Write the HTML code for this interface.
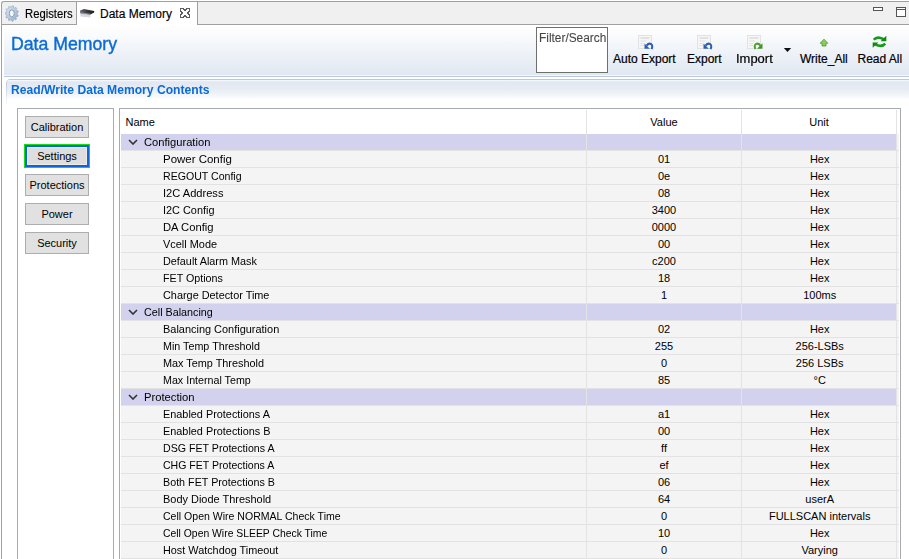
<!DOCTYPE html>
<html><head><meta charset="utf-8">
<style>
*{box-sizing:border-box;margin:0;padding:0}
html,body{width:909px;height:559px;overflow:hidden;background:#fff;font-family:"Liberation Sans",sans-serif;position:relative}
.abs{position:absolute}
#tabstrip{left:1px;top:1px;width:908px;height:24px;background:#f0f0f0;border-top:1px solid #a0a0a0;border-left:1px solid #a0a0a0;border-bottom:1px solid #a0a0a0;border-top-left-radius:3px}
#tab2{left:76px;top:1px;width:122px;height:24px;background:#fff;border-left:1px solid #a0a0a0;border-right:1px solid #a0a0a0;border-top:1px solid #a0a0a0}
.tabtxt{font-size:12px;color:#000;top:7px;white-space:nowrap;-webkit-text-stroke:0.15px #000}
#frameL{left:1px;top:24px;width:1px;height:535px;background:#a0a0a0}
#header{left:4px;top:25px;width:905px;height:51px;background:linear-gradient(#fff,#fbfcfd 15%,#e1e8f2);border-bottom:1px solid #f6f8fb}
#title{left:11px;top:34px;font-size:17.5px;transform-origin:0 0;transform:scaleX(1.01);-webkit-text-stroke:0.4px #0b6cd6;color:#0b6cd6;white-space:nowrap}
#hline1{left:4px;top:76px;width:905px;height:1px;background:#b9c9dd}
#hline2{left:6px;top:79px;width:903px;height:27px;border-top:1px solid #b9c9dd;border-left:1px solid #bccbe0;border-top-left-radius:4px;-webkit-mask-image:linear-gradient(#000 20%,transparent)}
#sechead{left:7px;top:80px;width:902px;height:20px;border-top-left-radius:3px;background:linear-gradient(#f8fafc,#e2e8f1 2px,#e7ecf4 9px,#f6f8fb 17px,#fff 19px)}
#secborder{display:none}
#sectitle{left:11px;top:83px;transform-origin:0 0;transform:scaleX(1.01);font-size:12px;font-weight:bold;color:#0a6ad6;white-space:nowrap}
#leftpanel{left:17px;top:108px;width:97px;height:460px;border:1px solid #a9a9b0;background:#fff}
.btn{left:25px;width:64px;height:22px;background:#e1e1e1;border:1px solid #adadad;font-size:11px;text-align:center;line-height:20px;color:#000}
#table{left:119px;top:108px;width:782px;height:460px;border:1px solid #a9a9b0;background:#fff}
.hdr{top:110px;height:24px;font-size:11px;line-height:24px;color:#000}
.vsep{top:110px;width:1px;height:449px;background:#e3e3e3}
.row{left:121px;width:778px;height:17px;background:#f4f4f4;border-bottom:1px solid #e2e2e2;font-size:11px;line-height:16px;color:#000}
.grp{background:linear-gradient(to right,#d2d2ee 775px,#f4f4f4 775px);border-bottom:1px solid #e4e4e4}
.chev{position:absolute;left:6.5px;top:4.5px}
.row span{position:absolute;white-space:nowrap}
.c1{left:42px;transform-origin:0 0}
.g1{left:23px;transform-origin:0 0}
.c2{left:466px;width:154px;text-align:center}
.c3{left:621.7px;width:154px;text-align:center}
.tb{font-size:12px;color:#000;top:52px;white-space:nowrap;-webkit-text-stroke:0.2px #000}
</style></head><body>
<div id="tabstrip" class="abs"></div>
<div id="tab2" class="abs"></div>
<svg class="abs" style="left:4.5px;top:4.5px" width="14.5" height="17" viewBox="0 0 16 16" preserveAspectRatio="none">
<defs><linearGradient id="gg" x1="0" y1="0" x2="1" y2="1"><stop offset="0" stop-color="#e2ebf5"/><stop offset="0.5" stop-color="#b9cbe0"/><stop offset="1" stop-color="#93a9c7"/></linearGradient></defs>
<path fill="url(#gg)" stroke="#8aa0bf" stroke-width="0.6" d="M7.50 2.00 L8.00 0.72 L9.36 0.94 L9.42 2.32 L10.74 2.95 L11.86 2.14 L12.88 3.06 L12.19 4.26 L12.96 5.51 L14.33 5.43 L14.69 6.76 L13.47 7.38 L13.44 8.85 L14.64 9.53 L14.22 10.84 L12.85 10.71 L12.03 11.93 L12.68 13.15 L11.62 14.03 L10.54 13.17 L9.19 13.76 L9.07 15.13 L7.71 15.30 L7.26 14.00 L5.81 13.76 L4.97 14.85 L3.73 14.25 L4.06 12.91 L2.97 11.93 L1.67 12.39 L0.95 11.22 L1.95 10.27 L1.56 8.85 L0.22 8.54 L0.25 7.17 L1.60 6.91 L2.04 5.51 L1.08 4.52 L1.85 3.38 L3.13 3.89 L4.26 2.95 L3.98 1.60 L5.24 1.06 L6.04 2.18 Z"/>
<ellipse cx="7.5" cy="7.9" rx="2.7" ry="3.3" fill="#f4f7fb" stroke="#7d94b4" stroke-width="0.9"/>
</svg>
<div class="abs tabtxt" style="left:25px;transform-origin:0 0;transform:scaleX(0.94)">Registers</div>
<svg class="abs" style="left:79px;top:8px" width="18" height="11" viewBox="0 0 18 11">
<defs><linearGradient id="cg" x1="0" y1="0" x2="1" y2="0"><stop offset="0" stop-color="#6a6a6a"/><stop offset="0.5" stop-color="#3a3a3a"/><stop offset="1" stop-color="#1e1e1e"/></linearGradient></defs>
<path d="M1.4 5.5 L11.4 7 L11.4 9.5 L1.4 8.5 Z" fill="#d6d8df"/>
<path d="M1.1 2.6 L4.9 1 L15.2 3 L15.2 4.4 L11.4 6.6 L1.1 5 Z" fill="url(#cg)"/>
<path d="M1.1 4.3 L11.4 5.8 L11.4 7 L1.1 5.6 Z" fill="#8a909c"/>
</svg>
<div class="abs tabtxt" style="left:100px">Data Memory</div>
<svg class="abs" style="left:180px;top:8px" width="10" height="10" viewBox="0 0 10 10"><path d="M0.5 0.5 H3 L5 2.5 L7 0.5 H9.5 V3 L7.5 5 L9.5 7 V9.5 H7 L5 7.5 L3 9.5 H0.5 V7 L2.5 5 L0.5 3 Z" fill="#fff" stroke="#5f5f5f" stroke-width="1" shape-rendering="crispEdges"/></svg>
<svg class="abs" style="left:872px;top:6px" width="14" height="6" viewBox="0 0 14 6"><rect x="1.5" y="1.5" width="9" height="3" fill="#fff" stroke="#555" stroke-width="1"/></svg>
<svg class="abs" style="left:895px;top:6px" width="13" height="13" viewBox="0 0 13 13"><rect x="1.5" y="1.5" width="9" height="9" fill="#fff" stroke="#555" stroke-width="1"/><line x1="1.5" y1="3.5" x2="10.5" y2="3.5" stroke="#555" stroke-width="1"/></svg>
<div id="frameL" class="abs"></div>
<div id="header" class="abs"></div>
<div id="title" class="abs">Data Memory</div>
<div id="hline1" class="abs"></div>
<div id="hline2" class="abs"></div>
<div id="sechead" class="abs"></div>
<div id="secborder" class="abs"></div>
<div id="sectitle" class="abs">Read/Write Data Memory Contents</div>

<div id="filter" class="abs" style="left:536px;top:27px;width:72px;height:46px;border:1px solid #6f6f6f;background:#fff"></div>
<div class="abs tb" style="left:539px;top:31px;color:#484848;-webkit-text-stroke:0.1px #484848;transform-origin:0 0;transform:scaleX(0.99)">Filter/Search</div>
<svg class="abs" style="left:637px;top:34px" width="18" height="17" viewBox="0 0 18 17"><rect x="1.5" y="1.5" width="13" height="13" fill="#f6f6f6" stroke="#e2e2e2"/><path d="M3.5 3.5H12.5M3.5 4.5H12.5M3.5 7H9M3.5 9.5H7M3.5 11.5H7" stroke="#e2e2e2"/><path d="M9.6 11.6 Q11.6 8.8 14 10 Q16.2 11.4 14.6 15.2" fill="none" stroke="#2b5fb3" stroke-width="2"/><path d="M7.5 9.5 V14.8 H12.8 Z" fill="#2b5fb3"/></svg>
<div class="abs tb" style="left:613px">Auto Export</div>
<svg class="abs" style="left:696px;top:34px" width="18" height="17" viewBox="0 0 18 17"><rect x="1.5" y="1.5" width="13" height="13" fill="#f6f6f6" stroke="#e2e2e2"/><path d="M3.5 3.5H12.5M3.5 4.5H12.5M3.5 7H9M3.5 9.5H7M3.5 11.5H7" stroke="#e2e2e2"/><path d="M9.6 11.6 Q11.6 8.8 14 10 Q16.2 11.4 14.6 15.2" fill="none" stroke="#2b5fb3" stroke-width="2"/><path d="M7.5 9.5 V14.8 H12.8 Z" fill="#2b5fb3"/></svg>
<div class="abs tb" style="left:687px">Export</div>
<svg class="abs" style="left:746px;top:34px" width="18" height="17" viewBox="0 0 18 17"><rect x="1.5" y="1.5" width="13" height="13" fill="#f6f6f6" stroke="#e2e2e2"/><path d="M3.5 3.5H12.5M3.5 4.5H12.5M3.5 7H9M3.5 9.5H7M3.5 11.5H7" stroke="#e2e2e2"/><path d="M14.4 11.6 Q12.4 8.8 10 10 Q7.8 11.4 9.4 15.2" fill="none" stroke="#4fa336" stroke-width="2"/><path d="M16.5 9.2 V14.8 H11 Z" fill="#3f9329"/></svg>
<div class="abs tb" style="left:736px;transform-origin:0 0;transform:scaleX(1.08)">Import</div>
<svg class="abs" style="left:783px;top:47px" width="9" height="6" viewBox="0 0 9 6"><path d="M0.8 1 H8.2 L4.5 5 Z" fill="#111"/></svg>
<svg class="abs" style="left:819px;top:38px" width="10" height="9" viewBox="0 0 10 9"><path d="M1.2 5.2 L5 1.2 L8.8 5.2 H7 V8 H3 V5.2 Z" fill="#86cf5c" stroke="#4f9531" stroke-width="0.8"/></svg>
<div class="abs tb" style="left:800px">Write_All</div>
<svg class="abs" style="left:872px;top:35px" width="15" height="14" viewBox="0 0 15 14"><path d="M1.8 4.8 Q5 0.8 11.5 4.2" fill="none" stroke="#179a17" stroke-width="2.6"/><path d="M14.3 0.8 V6.3 H8.6 Z" fill="#128512"/><path d="M13.2 8.6 Q10 12.6 3.5 9.6" fill="none" stroke="#179a17" stroke-width="2.6"/><path d="M0.7 12.8 V7.6 H6.4 Z" fill="#128512"/></svg>
<div class="abs tb" style="left:857.5px">Read All</div>

<div id="leftpanel" class="abs"></div>
<div class="abs btn" style="top:116px">Calibration</div>
<div class="abs" style="left:24px;top:144px;width:66px;height:24px;border:1px solid #12e012"></div><div class="abs btn" style="top:145px;border:2px solid #0b66d8;line-height:18px;box-shadow:inset 0 0 0 1px #f2ebe3;background:#dedede">Settings</div>
<div class="abs btn" style="top:174px">Protections</div>
<div class="abs btn" style="top:203px">Power</div>
<div class="abs btn" style="top:232px">Security</div>

<div id="table" class="abs"></div>
<div class="abs hdr" style="left:125.5px">Name</div>
<div class="abs hdr" style="left:587px;width:154px;text-align:center">Value</div>
<div class="abs hdr" style="left:742px;width:154px;text-align:center">Unit</div>
<div id="rows">
<div class="abs row grp" style="top:134px"><svg class="chev" width="10" height="6" viewBox="0 0 10 6"><path d="M1 1 L5 5 L9 1" fill="none" stroke="#333" stroke-width="1.6"/></svg><span class="g1" style="transform:scaleX(1.014)">Configuration</span></div>
<div class="abs row" style="top:151px"><span class="c1" style="transform:scaleX(1.043)">Power Config</span><span class="c2">01</span><span class="c3">Hex</span></div>
<div class="abs row" style="top:168px"><span class="c1" style="transform:scaleX(0.962)">REGOUT Config</span><span class="c2">0e</span><span class="c3">Hex</span></div>
<div class="abs row" style="top:185px"><span class="c1" style="transform:scaleX(1.009)">I2C Address</span><span class="c2">08</span><span class="c3">Hex</span></div>
<div class="abs row" style="top:202px"><span class="c1" style="transform:scaleX(0.99)">I2C Config</span><span class="c2">3400</span><span class="c3">Hex</span></div>
<div class="abs row" style="top:219px"><span class="c1" style="transform:scaleX(1.021)">DA Config</span><span class="c2">0000</span><span class="c3">Hex</span></div>
<div class="abs row" style="top:236px"><span class="c1" style="transform:scaleX(0.994)">Vcell Mode</span><span class="c2">00</span><span class="c3">Hex</span></div>
<div class="abs row" style="top:253px"><span class="c1" style="transform:scaleX(0.984)">Default Alarm Mask</span><span class="c2">c200</span><span class="c3">Hex</span></div>
<div class="abs row" style="top:270px"><span class="c1" style="transform:scaleX(0.973)">FET Options</span><span class="c2">18</span><span class="c3">Hex</span></div>
<div class="abs row" style="top:287px"><span class="c1" style="transform:scaleX(0.989)">Charge Detector Time</span><span class="c2">1</span><span class="c3">100ms</span></div>
<div class="abs row grp" style="top:304px"><svg class="chev" width="10" height="6" viewBox="0 0 10 6"><path d="M1 1 L5 5 L9 1" fill="none" stroke="#333" stroke-width="1.6"/></svg><span class="g1" style="transform:scaleX(0.979)">Cell Balancing</span></div>
<div class="abs row" style="top:321px"><span class="c1" style="transform:scaleX(0.995)">Balancing Configuration</span><span class="c2">02</span><span class="c3">Hex</span></div>
<div class="abs row" style="top:338px"><span class="c1" style="transform:scaleX(0.976)">Min Temp Threshold</span><span class="c2">255</span><span class="c3">256-LSBs</span></div>
<div class="abs row" style="top:355px"><span class="c1" style="transform:scaleX(0.987)">Max Temp Threshold</span><span class="c2">0</span><span class="c3">256 LSBs</span></div>
<div class="abs row" style="top:372px"><span class="c1" style="transform:scaleX(0.972)">Max Internal Temp</span><span class="c2">85</span><span class="c3">&deg;C</span></div>
<div class="abs row grp" style="top:389px"><svg class="chev" width="10" height="6" viewBox="0 0 10 6"><path d="M1 1 L5 5 L9 1" fill="none" stroke="#333" stroke-width="1.6"/></svg><span class="g1" style="transform:scaleX(1.021)">Protection</span></div>
<div class="abs row" style="top:406px"><span class="c1" style="transform:scaleX(0.988)">Enabled Protections A</span><span class="c2">a1</span><span class="c3">Hex</span></div>
<div class="abs row" style="top:423px"><span class="c1" style="transform:scaleX(0.988)">Enabled Protections B</span><span class="c2">00</span><span class="c3">Hex</span></div>
<div class="abs row" style="top:440px"><span class="c1" style="transform:scaleX(0.967)">DSG FET Protections A</span><span class="c2">ff</span><span class="c3">Hex</span></div>
<div class="abs row" style="top:457px"><span class="c1" style="transform:scaleX(0.959)">CHG FET Protections A</span><span class="c2">ef</span><span class="c3">Hex</span></div>
<div class="abs row" style="top:474px"><span class="c1" style="transform:scaleX(0.976)">Both FET Protections B</span><span class="c2">06</span><span class="c3">Hex</span></div>
<div class="abs row" style="top:491px"><span class="c1" style="transform:scaleX(0.996)">Body Diode Threshold</span><span class="c2">64</span><span class="c3">userA</span></div>
<div class="abs row" style="top:508px"><span class="c1" style="transform:scaleX(0.958)">Cell Open Wire NORMAL Check Time</span><span class="c2">0</span><span class="c3">FULLSCAN intervals</span></div>
<div class="abs row" style="top:525px"><span class="c1" style="transform:scaleX(0.944)">Cell Open Wire SLEEP Check Time</span><span class="c2">10</span><span class="c3">Hex</span></div>
<div class="abs row" style="top:542px"><span class="c1" style="transform:scaleX(0.986)">Host Watchdog Timeout</span><span class="c2">0</span><span class="c3">Varying</span></div>
</div>
<div class="abs vsep" style="left:586px"></div>
<div class="abs vsep" style="left:741px"></div>
<div class="abs vsep" style="left:896px"></div>
</body></html>
